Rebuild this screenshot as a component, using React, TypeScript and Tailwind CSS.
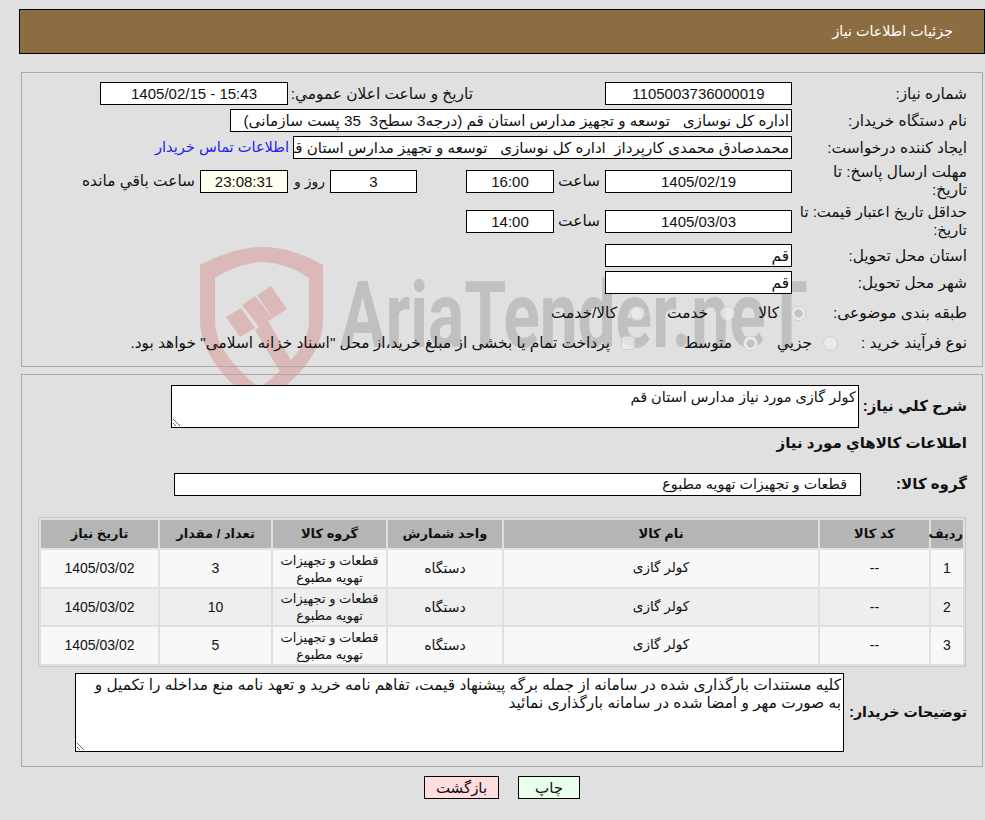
import type { ReactNode } from 'react';

const rows = [
  { id: 1, qty: 3, bg: 'bg-[#f8f8f8]', h: 'h-[37px]' },
  { id: 2, qty: 10, bg: 'bg-[#eeeeee]', h: 'h-[36px]' },
  { id: 3, qty: 5, bg: 'bg-[#f8f8f8]', h: 'h-[37px]' },
];

function Box({ className, bg = 'bg-white', children }: { className: string; bg?: string; children: ReactNode }) {
  return (
    <div className={`h-[23px] shrink-0 overflow-hidden whitespace-nowrap border border-black leading-[21px] ${bg} ${className}`}>
      {children}
    </div>
  );
}

function Radio({ checked }: { checked?: boolean }) {
  return (
    <input
      type="radio"
      disabled
      defaultChecked={checked}
      className="m-0 size-[15px] shrink-0 appearance-none rounded-full border border-[#cfcfcf] bg-[#eeeeee]/70 checked:bg-[radial-gradient(circle,#c4c4c4_42%,#eeeeee_50%)]"
    />
  );
}

function Watermark() {
  return (
    <div className="absolute left-0 top-0 h-[420px] w-[900px]" dir="ltr">
      <svg className="absolute left-0 top-0" width="340" height="420" viewBox="0 0 340 420" fill="#dbb9b9">
        <path
          fillRule="evenodd"
          d="M200 265C225 252 245 247 262 247C280 247 300 252 323 265L323 320C323 350 300 380 259 405C222 380 200 350 200 320ZM215 278C230 268 250 262 262 262C275 262 295 268 309 278L309 320C309 345 290 365 259 388C232 365 215 345 215 320Z"
        />
        <path d="M226 317L241 308L255 328L240 337Z" />
        <path d="M242 305L255 296L273 318L259 327Z" />
        <path d="M257 295L271 286L287 309L273 318Z" />
        <path d="M255 330L268 321L298 372L285 380Z" />
      </svg>
      <span className="absolute left-[340px] top-[261px] origin-left scale-x-[0.735] font-['Roboto',sans-serif] text-[92px] font-bold leading-[110px] text-[#c0c0c0]">
        AriaTender.neT
      </span>
    </div>
  );
}

export default function App() {
  return (
    <div dir="rtl" className="relative h-[820px] overflow-hidden bg-[#e0e0e0] pt-[9px] font-['Liberation_Sans','DejaVu_Sans',sans-serif] text-[15.4px] text-[#111]">
      <Watermark />

      <div className="relative ml-[19px] flex h-[45px] items-center border border-black bg-[#8c6d42] pr-[31px] text-[14.3px] text-white">
        جزئیات اطلاعات نیاز
      </div>

      <div className="relative ml-[21px] mr-[2px] mt-[18px] h-[295px] border border-[#aaa] pr-[15px] pt-[9px]">
        <div className="flex h-[23px] items-center">
          <div className="w-[175px] shrink-0">شماره نیاز:</div>
          <Box className="w-[187px] text-center text-[15px]">1105003736000019</Box>
          <div className="mr-[132px] w-[185px] shrink-0">تاریخ و ساعت اعلان عمومي:</div>
          <Box className="w-[188px] text-center text-[15px]">15:43 - 1405/02/15</Box>
        </div>
        <div className="mt-[4px] flex h-[23px] items-center">
          <div className="w-[175px] shrink-0">نام دستگاه خریدار:</div>
          <Box className="w-[562px] pr-[2px] text-[15.2px]">اداره کل نوسازی &nbsp; توسعه و تجهیز مدارس استان قم (درجه3 سطح3 &nbsp;35 پست سازمانی)</Box>
        </div>
        <div className="mt-[4px] flex h-[23px] items-center">
          <div className="w-[175px] shrink-0">ایجاد کننده درخواست:</div>
          <Box className="w-[499px] pr-[2px] text-[15.1px]">محمدصادق محمدی کارپرداز &nbsp;اداره کل نوسازی &nbsp; توسعه و تجهیز مدارس استان قم</Box>
          <a className="mr-[4px] text-[14.6px] text-[#2222ee]">اطلاعات تماس خریدار</a>
        </div>
        <div className="mt-[5px] flex h-[34px] items-center">
          <div className="w-[175px] shrink-0 whitespace-nowrap leading-[18px]">
            مهلت ارسال پاسخ: تا
            <br />
            تاریخ:
          </div>
          <Box className="w-[187px] text-center text-[15px]">1405/02/19</Box>
          <div className="w-[51px] shrink-0 pr-[5px]">ساعت</div>
          <Box className="w-[88px] text-center text-[15px]">16:00</Box>
          <div className="w-[49px] shrink-0" />
          <Box className="w-[87px] text-center text-[15px]">3</Box>
          <div className="w-[42px] shrink-0 pr-[5px] text-[14px]">روز و</div>
          <Box bg="bg-[#ffffee]" className="w-[88px] text-center text-[15px]">23:08:31</Box>
          <div className="whitespace-nowrap pr-[5px]">ساعت باقي مانده</div>
        </div>
        <div className="mt-[6px] flex h-[34px] items-center">
          <div className="w-[175px] shrink-0 whitespace-nowrap text-[14.9px] leading-[18px]">
            حداقل تاریخ اعتبار قیمت: تا
            <br />
            تاریخ:
          </div>
          <Box className="w-[187px] text-center text-[15px]">1405/03/03</Box>
          <div className="w-[51px] shrink-0 pr-[5px]">ساعت</div>
          <Box className="w-[88px] text-center text-[15px]">14:00</Box>
        </div>
        <div className="mt-[6px] flex h-[23px] items-center">
          <div className="w-[175px] shrink-0">استان محل تحویل:</div>
          <Box className="w-[187px] pr-[2px]">قم</Box>
        </div>
        <div className="mt-[4px] flex h-[23px] items-center">
          <div className="w-[175px] shrink-0">شهر محل تحویل:</div>
          <Box className="w-[187px] pr-[2px]">قم</Box>
        </div>
        <div className="mt-[9px] flex h-[20px] items-center">
          <div className="w-[161px] shrink-0 whitespace-nowrap">طبقه بندی موضوعی:</div>
          <Radio checked />
          <div className="mr-[12px] w-[44px] shrink-0">کالا</div>
          <Radio />
          <div className="mr-[12px] w-[63px] shrink-0">خدمت</div>
          <Radio />
          <div className="mr-[13px] whitespace-nowrap">کالا/خدمت</div>
        </div>
        <div className="mt-[10px] flex h-[20px] items-center">
          <div className="w-[129px] shrink-0 whitespace-nowrap">نوع فرآیند خرید :</div>
          <Radio />
          <div className="mr-[11px] w-[54px] shrink-0">جزیي</div>
          <Radio checked />
          <div className="mr-[11px] w-[97px] shrink-0">متوسط</div>
          <input type="checkbox" disabled className="m-0 size-[14px] shrink-0 appearance-none rounded-[3px] border border-[#cfcfcf] bg-[#eeeeee]/70" />
          <div className="mr-[11px] whitespace-nowrap">پرداخت تمام یا بخشی از مبلغ خرید،از محل "اسناد خزانه اسلامی" خواهد بود.</div>
        </div>
      </div>

      <div className="relative ml-[21px] mr-[2px] mt-[7px] h-[393px] border border-[#aaa] pr-[15px] pt-[10px]">
        <div className="flex items-center">
          <div className="w-[108px] shrink-0 text-[15px] font-bold">شرح کلي نیاز:</div>
          <textarea readOnly defaultValue="کولر گازی مورد نیاز مدارس استان قم" className="block h-[43px] w-[688px] resize border border-black bg-white px-[2px] pb-0 pt-[2px] text-[14.5px] leading-[18px] outline-none" />
        </div>
        <div className="mt-[6px] h-[18px] text-[15px] font-bold leading-[18px]">اطلاعات کالاهاي مورد نیاز</div>
        <div className="mt-[21px] flex items-center">
          <div className="w-[106px] shrink-0 text-[15px] font-bold">گروه کالا:</div>
          <Box className="w-[687px] pr-[13px] text-[14.3px]">قطعات و تجهیزات تهویه مطبوع</Box>
        </div>

        <table className="mr-[1px] mt-[21px] w-[928px] table-fixed border-separate border-spacing-[2px] border border-[#c8c8c8] text-center text-[14px]">
          <thead>
            <tr className="h-[28px] bg-[#b5b5b5] text-[13px]">
              <th className="w-[32px] font-bold">ردیف</th>
              <th className="w-[109px] font-bold">کد کالا</th>
              <th className="w-[314px] font-bold">نام کالا</th>
              <th className="w-[114px] font-bold">واحد شمارش</th>
              <th className="w-[113px] font-bold">گروه کالا</th>
              <th className="w-[111px] font-bold">تعداد / مقدار</th>
              <th className="w-[117px] font-bold">تاریخ نیاز</th>
            </tr>
          </thead>
          <tbody>
            {rows.map((row) => (
              <tr key={row.id} className={`${row.h} ${row.bg}`}>
                <td>{row.id}</td>
                <td>--</td>
                <td className="text-[13.5px]">کولر گازی</td>
                <td>دستگاه</td>
                <td className="text-[13px] leading-[17px]">قطعات و تجهیزات تهویه مطبوع</td>
                <td>{row.qty}</td>
                <td>1405/03/02</td>
              </tr>
            ))}
          </tbody>
        </table>

        <div className="mt-[6px] flex items-center">
          <div className="w-[123px] shrink-0 whitespace-nowrap text-[14.2px] font-bold">توضیحات خریدار:</div>
          <textarea
            readOnly
            defaultValue="کلیه مستندات بارگذاری شده در سامانه از جمله برگه پیشنهاد قیمت، تفاهم نامه خرید و تعهد نامه منع مداخله را تکمیل و به صورت مهر و امضا شده در سامانه بارگذاری نمائید"
            className="block h-[79px] w-[769px] resize border border-black bg-white px-[2px] pb-0 pt-[2px] text-[15.4px] leading-[18px] outline-none"
          />
        </div>
      </div>

      <div className="relative mt-[9px] flex justify-center gap-[19px] pl-[19px] text-[15px]">
        <button className="h-[23px] w-[62px] border border-black bg-[#eaffea]">چاپ</button>
        <button className="h-[23px] w-[75px] border border-black bg-[#ffdddd]">بازگشت</button>
      </div>
    </div>
  );
}
